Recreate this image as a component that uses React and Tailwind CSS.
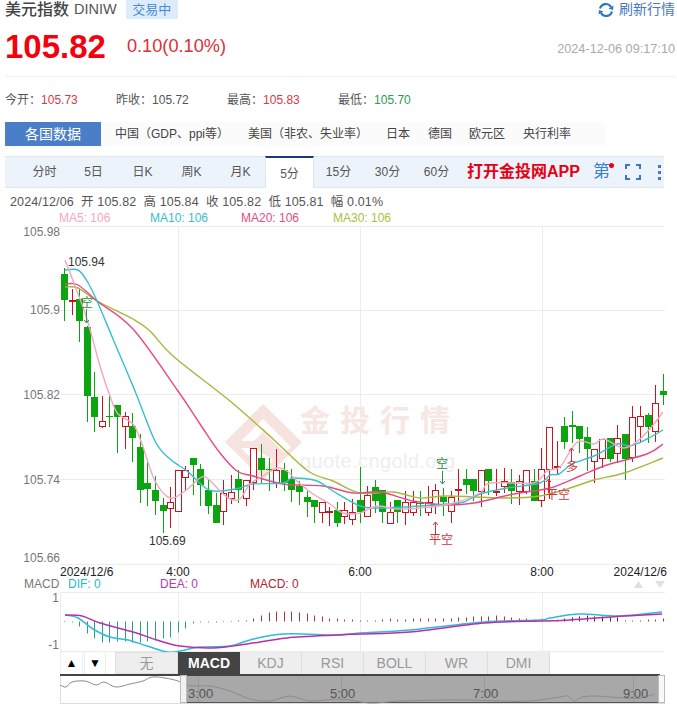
import React from "react";

const FONT = { fontFamily: '"Liberation Sans","Noto Sans CJK SC",sans-serif' };

// colour, wick top, body top, body bottom, wick bottom  (g = green, r = red, values in page px)
const CANDLES = [
  ["g",267,273,299,320],["R",288,299,301,314],["g",288,298,320,341],["g",325,326,395,421],["g",371,396,416,431],
  ["r",395,420,425,427],["G",394,415,416,426],["g",404,404,416,452],["r",411,415,425,448],["g",412,425,437,461],
  ["g",433,446,489,502],["g",458,482,488,505],["g",475,489,500,514],["g",497,504,510,532],["r",486,501,507,527],
  ["r",469,469,510,510],["r",465,469,476,489],["g",457,457,464,494],["g",463,468,484,505],["g",479,489,505,513],
  ["g",492,504,522,522],["r",479,492,510,524],["r",474,491,497,503],["g",469,478,489,502],["r",479,479,497,505],
  ["r",447,447,481,489],["g",443,457,469,482],["G",457,468,469,490],["r",448,469,481,487],["g",462,469,482,490],
  ["g",468,478,489,501],["g",480,485,491,504],["g",490,496,501,516],["g",499,499,506,522],["r",501,501,511,522],
  ["R",506,510,512,525],["g",501,509,522,526],["r",501,509,515,523],["r",498,511,518,524],["g",466,499,511,522],
  ["r",485,494,515,515],["g",479,486,500,512],["g",489,489,511,522],["r",501,511,522,522],["g",499,499,511,522],
  ["r",490,501,511,524],["r",490,501,511,515],["G",490,502,503,515],["r",485,501,511,515],["r",483,489,503,513],
  ["g",487,496,501,515],["r",490,496,510,522],["R",468,488,490,503],["g",468,478,484,493],["g",478,478,490,500],
  ["r",469,469,490,506],["g",468,468,480,494],["R",468,490,492,495],["r",467,480,485,492],["g",468,481,490,503],
  ["r",474,480,490,504],["r",469,469,490,493],["g",468,480,500,500],["r",447,468,499,506],["r",426,426,468,498],
  ["R",440,465,467,473],["g",416,425,441,448],["G",410,424,426,442],["g",425,425,438,452],["g",426,436,448,470],
  ["r",448,448,460,482],["r",438,438,457,467],["g",437,437,458,461],["r",424,437,452,462],["g",433,433,458,479],
  ["r",405,416,456,461],["r",405,415,425,442],["g",412,414,426,442],["r",384,402,430,441],["g",373,390,394,404],
];
const STEP = (662.7 - 64) / (CANDLES.length - 1);

const MA5 = [[65,259],[75,285],[87,318],[100,365],[110,395],[118,413],[133,423],[142,443],[155,480],[170,497],[185,490],[200,477],[207,477],[220,490],[230,498],[240,498],[250,483],[263,475],[277,467],[287,470],[297,480],[313,493],[330,503],[343,512],[360,512],[377,505],[397,508],[420,507],[450,503],[480,492],[490,482],[533,482],[547,470],[560,466],[572,447],[580,440],[594,443],[604,438],[624,447],[640,438],[654,423],[663,411]];
const MA10 = [[65,269],[78,269],[87,280],[97,300],[113,338],[135,390],[155,440],[170,458],[187,470],[207,488],[220,490],[240,487],[253,483],[283,482],[293,477],[317,480],[333,490],[360,505],[380,507],[420,505],[447,503],[464,501],[480,493],[507,487],[540,482],[550,474],[559,473],[572,463],[594,455],[617,443],[630,445],[647,438],[663,429]];
const MA20 = [[65,283],[78,284],[97,300],[133,328],[178,390],[200,423],[220,452],[237,470],[253,475],[283,483],[323,485],[353,492],[380,491],[413,500],[447,504],[474,502],[514,493],[550,487],[580,475],[607,464],[647,453],[663,443]];
const MA30 = [[65,286],[78,287],[97,300],[133,318],[150,330],[173,355],[230,400],[273,438],[308,470],[333,480],[360,492],[393,491],[420,497],[447,495],[507,497],[540,495],[570,487],[594,479],[624,472],[663,457]];
const DIF = [[65,614],[78,617],[93,628],[110,636],[128,639],[147,645],[167,651],[180,650],[200,646],[230,645],[250,639],[283,633],[337,634],[360,632],[410,629],[484,621],[540,619],[550,617],[580,613],[620,615],[662,611]];
const DEA = [[65,614],[82,615],[100,622],[133,631],[157,639],[180,645],[213,647],[247,643],[287,637],[337,634],[360,633],[410,631],[484,622],[540,620],[570,619],[624,615],[662,613]];
const HIST = [0,-1,-5,-12,-17,-21,-21,-20,-20,-21,-21,-20,-19,-17,-16,-11,-7,-2,-1,-1,-1,0,0,1,1,3,6,9,10,10,10,9,8,6,5,3,3,2,2,1,1,1,2,3,2,2,3,3,3,3,3,3,4,4,5,5,5,6,5,4,3,3,2,1,1,1,3,4,5,6,5,5,4,4,1,1,1,2,2,3];
const MINI = [[60,684],[66,686],[72,681],[85,680],[96,684],[104,681],[116,686],[130,683],[143,680],[152,676],[165,677],[178,680],[186,684],[198,685],[210,685],[230,690],[250,698],[270,700],[290,695],[310,700],[340,698],[370,702],[400,700],[440,699],[470,699],[500,700],[530,700],[560,696],[568,695],[574,700],[582,696],[595,695],[610,696],[625,697],[640,697],[655,693]];

function smooth(p) {
  let d = `M${p[0][0]} ${p[0][1]}`;
  for (let i = 0; i < p.length - 1; i++) {
    const a = p[Math.max(i - 1, 0)], b = p[i], c = p[i + 1], e = p[Math.min(i + 2, p.length - 1)];
    d += `C${(b[0] + (c[0] - a[0]) / 6).toFixed(1)} ${(b[1] + (c[1] - a[1]) / 6).toFixed(1)} ${(c[0] - (e[0] - b[0]) / 6).toFixed(1)} ${(c[1] - (e[1] - b[1]) / 6).toFixed(1)} ${c[0]} ${c[1]}`;
  }
  return d;
}

function Candle({ c, i }) {
  const x = Math.round(64 + STEP * i) + 0.5;
  const [t, wt, bt, bb, wb] = c;
  const up = t === "r" || t === "R";
  const col = up ? "#c9151e" : "#0aa50f";
  return (
    <g>
      <line x1={x} x2={x} y1={wt} y2={bt} stroke={col} />
      <line x1={x} x2={x} y1={bb} y2={wb} stroke={col} />
      {t === "r" && <rect x={x - 3} y={bt + 0.5} width={6} height={bb - bt} fill="#fff" stroke={col} />}
      {t === "g" && <rect x={x - 3.5} y={bt} width={7} height={bb - bt} fill={col} />}
      {(t === "R" || t === "G") && <rect x={x - 3.5} y={bt} width={7} height={Math.max(bb - bt, 1)} fill={col} />}
    </g>
  );
}

const T = ({ children, ...p }) => <text {...p}>{children}</text>;

function Chart() {
  const hs = [225.5, 309.5, 393.5, 478.5, 563.5];
  const vs = [178.5, 360.5, 542.5];
  return (
    <svg width="677" height="426" viewBox="0 225 677 426" className="block" style={FONT}>
      {/* watermark */}
      <path d="M263 403L302 441L263 479L225 441ZM263 418L241 440L254 440L263 431L285 452L291 446ZM241 447L263 469L273 459L254 447Z" fill="#f6e3df" fillRule="evenodd" />
      <T x="300" y="430" fontSize="30" letterSpacing="10" fill="#f7e6e2" fontWeight="700">金投行情</T>
      <T x="300" y="467" fontSize="20" letterSpacing="0.4" fill="#efeeee">quote.cngold.org</T>

      {hs.map((y) => <line key={y} x1="60" x2="665" y1={y} y2={y} stroke="#ececec" />)}
      {vs.map((x) => <line key={x} x1={x} x2={x} y1="225" y2="563" stroke="#ececec" />)}

      <g fill="#777" fontSize="12" textAnchor="end">
        <T x="60" y="234.5">105.98</T>
        <T x="60" y="313">105.9</T>
        <T x="60" y="397.5">105.82</T>
        <T x="60" y="482.5">105.74</T>
        <T x="60" y="560.5">105.66</T>
      </g>

      {CANDLES.map((c, i) => <Candle key={i} c={c} i={i} />)}

      <path d={smooth(MA30)} fill="none" stroke="#a9b63c" strokeWidth="1.4" />
      <path d={smooth(MA20)} fill="none" stroke="#e64a86" strokeWidth="1.4" />
      <path d={smooth(MA10)} fill="none" stroke="#36c0cc" strokeWidth="1.4" />
      <path d={smooth(MA5)} fill="none" stroke="#f4a6c0" strokeWidth="1.4" />

      <T x="68" y="265" fontSize="12" fill="#333">105.94</T>
      <T x="149" y="544" fontSize="12" fill="#333">105.69</T>

      {/* trade marks */}
      <g fill="#1f8f3a" stroke="none" fontSize="12">
        <T x="81" y="306">空</T>
        <T x="436" y="467">空</T>
      </g>
      <g stroke="#3a8a55" fill="none">
        <path d="M86.5 308V322M84 319L86.5 322L89 319" />
        <path d="M442.5 470V483M440 480L442.5 483L445 480" />
      </g>
      <g fill="#d0343c" fontSize="12">
        <T x="429" y="543">平空</T>
        <T x="546" y="498">平空</T>
        <T x="566" y="470">多</T>
      </g>
      <g stroke="#d0343c" fill="none">
        <path d="M435.5 534V521M433 524L435.5 521L438 524" />
        <path d="M548.5 492V478M546 481L548.5 478L551 481" />
        <path d="M571.5 460V447M569 450L571.5 447L574 450" />
      </g>

      {/* time axis */}
      <g fill="#222" fontSize="12">
        <T x="60" y="575">2024/12/6</T>
        <T x="178" y="575" textAnchor="middle">4:00</T>
        <T x="360" y="575" textAnchor="middle">6:00</T>
        <T x="542" y="575" textAnchor="middle">8:00</T>
        <T x="667" y="575" textAnchor="end">2024/12/6</T>
      </g>

      {/* MACD legend */}
      <g fontSize="12">
        <T x="24" y="587" fill="#777">MACD</T>
        <T x="68" y="587" fill="#22b8d6">DIF: 0</T>
        <T x="160" y="587" fill="#b23ab2">DEA: 0</T>
        <T x="250" y="587" fill="#b8222c">MACD: 0</T>
      </g>
      <path d="M634 587L638.5 580L643 587Z" fill="#e0e0e0" />
      <path d="M655 580L660 587L665 580Z" fill="#e0e0e0" />

      {/* MACD pane */}
      <line x1="60" x2="665" y1="591.5" y2="591.5" stroke="#ececec" />
      <line x1="60" x2="665" y1="650.5" y2="650.5" stroke="#ececec" />
      <line x1="60.5" x2="60.5" y1="591" y2="651" stroke="#ececec" />
      {vs.map((x) => <line key={x} x1={x} x2={x} y1="591" y2="650" stroke="#ececec" />)}
      <g fill="#777" fontSize="12" textAnchor="end">
        <T x="59" y="601">1</T>
        <T x="59" y="648">-1</T>
      </g>
      {HIST.map((v, i) => {
        const x = Math.round(64 + STEP * i) + 0.5;
        return (
          <line key={i} x1={x} x2={x} y1={620.5} y2={620.5 - (v === 0 ? 0.5 : v)} stroke={v < 0 ? "#2a9d8f" : i > 64 && i < 75 ? "#5a2030" : "#b5323c"} />
        );
      })}
      <path d={smooth(DIF)} fill="none" stroke="#2fbcd8" strokeWidth="1.5" />
      <path d={smooth(DEA)} fill="none" stroke="#b830a8" strokeWidth="1.5" />
    </svg>
  );
}

function MiniNav() {
  return (
    <svg width="677" height="31" viewBox="0 673 677 31" className="block" style={FONT}>
      <rect x="60" y="673" width="600" height="2" fill="#444" />
      <line x1="60.5" x2="60.5" y1="675" y2="702" stroke="#ddd" />
      <line x1="60" x2="665" y1="702.5" y2="702.5" stroke="#ddd" />
      <rect x="186" y="675" width="472" height="26" fill="#a8a8a8" />
      <rect x="186" y="701" width="472" height="1" fill="#555" />
      <path d={smooth(MINI)} fill="none" stroke="#8c8c8c" />
      {[198.5, 341.5, 484.5, 633.5].map((x) => <line key={x} x1={x} x2={x} y1="675" y2="701" stroke="#999" />)}
      <g fill="#555" fontSize="13">
        <text x="188" y="697">3:00</text>
        <text x="330" y="697">5:00</text>
        <text x="473" y="697">7:00</text>
        <text x="623" y="697">9:00</text>
      </g>
      <rect x="180.5" y="674.5" width="6" height="27" fill="#f2f2f2" stroke="#bbb" />
      <rect x="658.5" y="674.5" width="6" height="27" fill="#f8f8f8" stroke="#bbb" />
    </svg>
  );
}

const Stat = ({ label, value, color }) => (
  <div className="w-[111px] text-[12px] text-[#555]">
    {label}：<span className={color}>{value}</span>
  </div>
);

export default function App() {
  return (
    <div className="w-[677px] bg-white overflow-hidden" style={FONT}>
      <div className="pl-[5px] pr-[2px]">
        <div className="h-[19px] flex items-center">
          <span className="text-[16px] leading-[19px] font-medium text-[#444]">美元指数</span>
          <span className="ml-[5px] text-[14.5px] text-[#555]">DINIW</span>
          <span className="ml-[9px] h-[19px] w-[52px] flex items-center justify-center bg-[#dcecfb] text-[#4a8ad0] text-[13px]">交易中</span>
          <span className="ml-auto flex items-center text-[14px] text-[#4a78c0]">
            <svg width="16" height="16" viewBox="0 0 16 16" className="mr-[5px]" fill="none">
              <path d="M2 6.5A6 6 0 0 1 13 5" stroke="#2f74c0" strokeWidth="2.2" />
              <path d="M14 9.5A6 6 0 0 1 3 11" stroke="#2f74c0" strokeWidth="2.2" />
              <path d="M15.5 3.5L15 8L10.5 6.5Z" fill="#2f74c0" />
              <path d="M.5 12.5L1 8L5.5 9.5Z" fill="#2f74c0" />
            </svg>
            刷新行情
          </span>
        </div>
        <div className="h-[58px] flex items-start border-b border-[#eeeeee]">
          <span className="mt-[8px] text-[33px] leading-[40px] font-bold text-[#f5000d]">105.82</span>
          <span className="mt-[14px] ml-[21px] text-[18.2px] leading-[26px] text-[#d9303a]">0.10(0.10%)</span>
          <span className="ml-auto mt-[22px] text-[12.7px] leading-[16px] text-[#aaaaaa]">2024-12-06 09:17:10</span>
        </div>
        <div className="h-[45px] flex items-center">
          <Stat label="今开" value="105.73" color="text-[#d8384a]" />
          <Stat label="昨收" value="105.72" color="text-[#555]" />
          <Stat label="最高" value="105.83" color="text-[#d8384a]" />
          <Stat label="最低" value="105.70" color="text-[#2e9a4e]" />
        </div>
        <div className="h-[24px] flex items-center text-[12px] text-[#444] bg-[#fbfbfb] w-[600px]">
          <span className="w-[96px] h-full flex items-center justify-center bg-[#4a7fc7] text-white text-[14px]">各国数据</span>
          <span className="ml-[14px] w-[133px]">中国（GDP、ppi等）</span>
          <span className="w-[138px]">美国（非农、失业率）</span>
          <span className="w-[42px]">日本</span>
          <span className="w-[41px]">德国</span>
          <span className="w-[54px]">欧元区</span>
          <span>央行利率</span>
        </div>
        <div className="mt-[10px] h-[32px] w-[659px] flex bg-[#edf3fb] border-y border-[#dfe6f0] text-[12px] text-[#555]">
          <div className="w-[15px]" />
          {["分时", "5日", "日K", "周K", "月K"].map((t) => (
            <div key={t} className="w-[49px] flex items-center justify-center">{t}</div>
          ))}
          <div className="w-[49px] -mt-px mb-[-1px] flex items-center justify-center bg-white border-t-2 border-[#1a3a80] border-x border-x-[#dfe6f0] pt-[2px]">5分</div>
          {["15分", "30分", "60分"].map((t) => (
            <div key={t} className="w-[49px] flex items-center justify-center">{t}</div>
          ))}
          <div className="ml-[6px] flex items-center text-[16px] font-bold text-[#e60012]">打开金投网APP</div>
          <div className="relative ml-[13px] flex items-center text-[17px] text-[#3a80c8]">
            第
            <span className="absolute right-[-4px] top-[6px] w-[5px] h-[5px] rounded-full bg-[#e60012]" />
          </div>
          <div className="ml-[15px] flex items-center">
            <svg width="16" height="16" viewBox="0 0 16 16" fill="none" stroke="#3a78c0" strokeWidth="2">
              <path d="M1 5V1H5M11 1H15V5M15 11V15H11M5 15H1V11" />
            </svg>
          </div>
          <div className="ml-[17px] flex flex-col justify-center gap-[3px]">
            <span className="w-[3px] h-[3px] bg-[#4a78b0]" />
            <span className="w-[3px] h-[3px] bg-[#4a78b0]" />
            <span className="w-[3px] h-[3px] bg-[#4a78b0]" />
          </div>
        </div>
      </div>
      <div className="h-[22px] pl-[10px] flex items-end pb-[-1px] text-[12.5px] leading-[15px] text-[#555] whitespace-pre tracking-[0.13px]">
        2024/12/06  开 105.82  高 105.84  收 105.82  低 105.81  幅 0.01%
      </div>
      <div className="h-[16px] flex items-center text-[12px] leading-[14px]">
        <span className="ml-[59px] w-[91px] text-[#f4a6c0]">MA5: 106</span>
        <span className="w-[91px] text-[#36c0cc]">MA10: 106</span>
        <span className="w-[92px] text-[#e64a86]">MA20: 106</span>
        <span className="text-[#a9c03c]">MA30: 106</span>
      </div>
      <Chart />
      <div className="h-[22px] ml-[60px] flex text-[14px] text-[#999]">
        <div className="w-[23px] flex items-center justify-center border-x border-[#eee] text-black text-[12px]">▲</div>
        <div className="ml-[1px] w-[22px] flex items-center justify-center border-x border-[#eee] text-black text-[12px]">▼</div>
        <div className="ml-[9px] flex">
          <div className="w-[63px] flex items-center justify-center bg-[#eeeeee] border border-[#e0e0e0]">无</div>
          <div className="w-[62px] flex items-center justify-center bg-[#444444] text-white font-bold">MACD</div>
          {["KDJ", "RSI", "BOLL", "WR", "DMI"].map((t) => (
            <div key={t} className="w-[62px] flex items-center justify-center bg-[#eeeeee] border-r border-[#dddddd]">{t}</div>
          ))}
        </div>
      </div>
      <MiniNav />
    </div>
  );
}
